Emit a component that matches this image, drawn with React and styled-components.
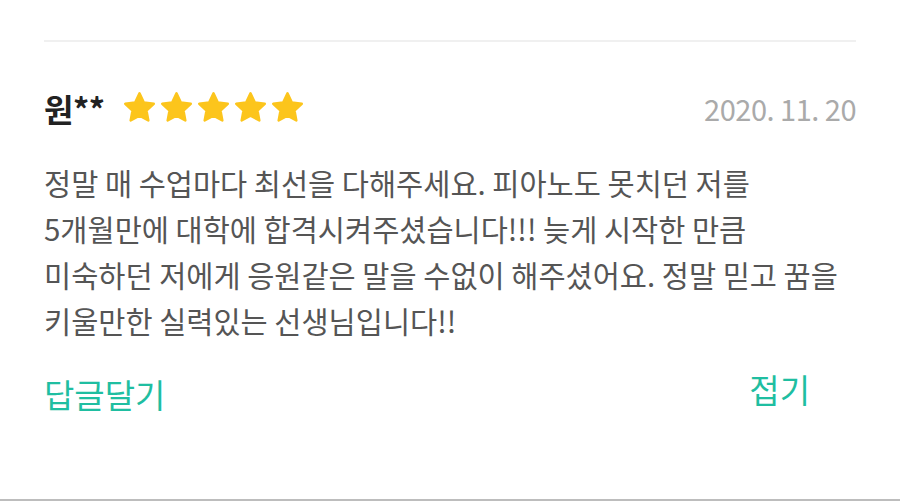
import React from 'react'
import styled, { createGlobalStyle } from 'styled-components'

const GlobalStyle = createGlobalStyle`
  html, body {
    margin: 0;
    padding: 0;
    background: #fff;
    font-family: "Noto Sans CJK KR", "Noto Sans", sans-serif;
  }
`

const Page = styled.div`
  width: 900px;
  height: 501px;
  box-sizing: border-box;
  border-bottom: 2px solid #bdbdbd;
  display: flex;
  flex-direction: column;
`

const Review = styled.section`
  margin: 40px 44px 0;
  border-top: 2px solid #f0f0f0;
  display: flex;
  flex-direction: column;
`

const Head = styled.div`
  display: flex;
  align-items: center;
  justify-content: space-between;
  margin-top: 44px;
  height: 44px;
`

const Who = styled.div`
  display: flex;
  align-items: center;
  gap: 20px;
`

const Name = styled.span`
  font-size: 32px;
  font-weight: 700;
  color: #222;
  letter-spacing: -0.5px;
`

const Stars = styled.div`
  display: flex;
  gap: 6px;
  margin-top: -2px;
`

const DateText = styled.span`
  font-size: 29px;
  color: #aaa;
  letter-spacing: -0.5px;
`

const Body = styled.p`
  margin: 29px 0 0;
  font-size: 29.5px;
  line-height: 46px;
  color: #555;
`

const Actions = styled.div`
  display: flex;
  justify-content: space-between;
  align-items: flex-start;
  margin-top: 22px;
  padding-right: 46px;
`

const Action = styled.button`
  border: none;
  background: none;
  padding: 0;
  font-family: inherit;
  font-size: 33px;
  color: #1fbea1;
  margin-top: ${p => p.$offset || 0}px;
  cursor: pointer;
`

function Star() {
  return (
    <svg width="31" height="30" viewBox="2 1.8 20 19.2">
      <path
        d="M12 2.6l2.8 5.9 6.4.8-4.7 4.4 1.2 6.4L12 17l-5.7 3.1 1.2-6.4L2.8 9.3l6.4-.8z"
        fill="#fcc51c"
        stroke="#fcc51c"
        strokeWidth="1.6"
        strokeLinejoin="round"
      />
    </svg>
  )
}

export default function App() {
  return (
    <>
      <GlobalStyle />
      <Page>
        <Review>
          <Head>
            <Who>
              <Name>원**</Name>
              <Stars>
                {[0, 1, 2, 3, 4].map(i => <Star key={i} />)}
              </Stars>
            </Who>
            <DateText>2020. 11. 20</DateText>
          </Head>
          <Body>
            정말 매 수업마다 최선을 다해주세요. 피아노도 못치던 저를<br />
            5개월만에 대학에 합격시켜주셨습니다!!! 늦게 시작한 만큼<br />
            미숙하던 저에게 응원같은 말을 수없이 해주셨어요. 정말 믿고 꿈을<br />
            키울만한 실력있는 선생님입니다!!
          </Body>
          <Actions>
            <Action $offset={5}>답글달기</Action>
            <Action>접기</Action>
          </Actions>
        </Review>
      </Page>
    </>
  )
}
